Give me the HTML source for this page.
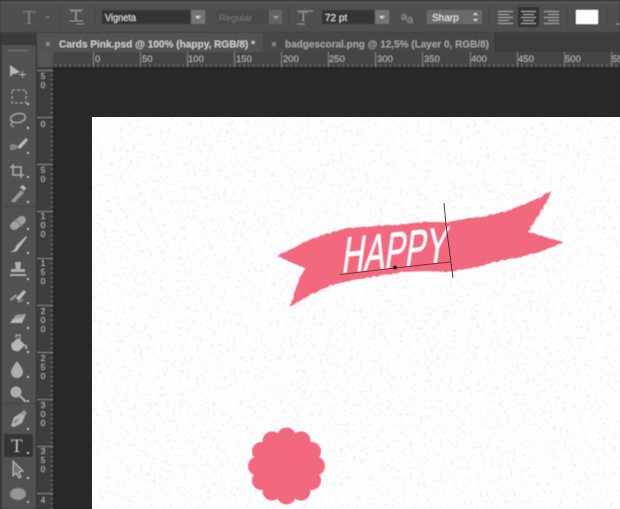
<!DOCTYPE html>
<html><head><meta charset="utf-8"><style>
html,body{margin:0;padding:0;background:#282828;width:620px;height:509px;overflow:hidden}
svg{display:block;position:absolute;left:0;top:0}
text{font-family:"Liberation Sans",sans-serif}
</style></head><body>
<svg width="620" height="509" viewBox="0 0 620 509" xmlns="http://www.w3.org/2000/svg">
<defs>
<filter id="b" x="-5%" y="-5%" width="110%" height="110%"><feGaussianBlur stdDeviation="0.5"/></filter>
<filter id="bi" x="-5%" y="-5%" width="110%" height="110%"><feGaussianBlur stdDeviation="0.65"/></filter>
<filter id="n" x="0" y="0" width="100%" height="100%">
<feTurbulence type="fractalNoise" baseFrequency="0.3" numOctaves="3" seed="4"/>
<feColorMatrix values="0 0 0 0 0.72  0 0 0 0 0.72  0 0 0 0 0.72  5 0 0 0 -2.9"/>
<feGaussianBlur stdDeviation="0.6"/>
</filter>
<filter id="r" x="-3%" y="-3%" width="106%" height="106%">
<feTurbulence type="fractalNoise" baseFrequency="0.25" numOctaves="2" seed="7" result="t"/>
<feDisplacementMap in="SourceGraphic" in2="t" scale="2.200"/>
<feGaussianBlur stdDeviation="0.4"/>
</filter>
<pattern id="hticks" width="4.71" height="15" patternUnits="userSpaceOnUse" x="93" y="52"><rect x="0" y="12" width="1" height="3" fill="#6a6a6a"/></pattern>
<pattern id="vticks" width="17" height="4.71" patternUnits="userSpaceOnUse" x="37" y="117"><rect x="13" y="0" width="3" height="1" fill="#6a6a6a"/></pattern>
</defs>

<!-- canvas + pasteboard -->
<rect width="620" height="509" fill="#282828"/>
<rect x="92" y="117" width="528" height="392" fill="#fefefe"/>
<rect x="92" y="117" width="528" height="392" filter="url(#n)" opacity=".45"/>

<!-- artwork -->
<path filter="url(#r)" fill="#f2697f" d="M277 256 L295 247 L313 238 L330 233 L347 228 L375 226 L403 224 L425 222 L447 222 L465 219 L483 217 L503 212 L523 205 L538 198 L552 191 L545 205 L536 219 L528 232 L545 237 L563 242 L550 248 L537 253 L520 257 L503 260 L476 267 L450 272 L426 271 L403 272 L378 276 L353 280 L336 284 L320 290 L305 298 L290 307 L295 290 L300 278 L305 268 L290 262 Z"/>
<g fill="#f2697f" filter="url(#b)">
<circle cx="286.500" cy="466" r="32"/>
<circle cx="286.500" cy="437" r="9.500"/><circle cx="301" cy="440.900" r="9.500"/><circle cx="311.600" cy="451.500" r="9.500"/><circle cx="315.500" cy="466" r="9.500"/><circle cx="311.600" cy="480.500" r="9.500"/><circle cx="301" cy="491.100" r="9.500"/><circle cx="286.500" cy="495" r="9.500"/><circle cx="272" cy="491.100" r="9.500"/><circle cx="261.400" cy="480.500" r="9.500"/><circle cx="257.500" cy="466" r="9.500"/><circle cx="261.400" cy="451.500" r="9.500"/><circle cx="272" cy="440.900" r="9.500"/>
</g>
<g filter="url(#b)">
<text transform="translate(341 273) rotate(-6) skewX(-14) scale(.62 1)" font-size="50" fill="#fff" stroke="#fff" stroke-width=".8">HAPPY</text>
</g>
<path d="M340 274.500 L395 268 L450 262" fill="none" stroke="#7a2a3a" stroke-width=".9"/>
<path d="M444 203 L446 225 L450 255 L453 278" fill="none" stroke="#3a2a2d" stroke-width=".9"/>
<circle cx="395" cy="267.500" r="2" fill="#222"/>

<g filter="url(#b)">
<!-- options bar -->
<rect width="620" height="33" fill="#505050"/>
<rect y="0" width="620" height="2" fill="#3f3f3f"/>
<rect y="2" width="620" height="1" fill="#636363"/>
<rect y="32" width="620" height="1" fill="#3c3c3c"/>
<text x="23" y="24" font-size="20" fill="#7e7e7e" style="font-family:'Liberation Serif',serif">T</text>
<path d="M45 16l5 0-2.500 3z" fill="#757575"/>
<rect x="60" y="6" width="1" height="22" fill="#454545"/>
<text x="71" y="21" font-size="16" fill="#989898" style="font-family:'Liberation Serif',serif">T</text>
<path d="M69 10h14M69 21h14M76 24h8" stroke="#929292" stroke-width="1" fill="none"/>
<rect x="94" y="6" width="1" height="22" fill="#454545"/>
<!-- font combos -->
<rect x="102" y="10" width="89" height="14" fill="#363636"/>
<rect x="191" y="10" width="14" height="14" fill="#747474"/>
<path d="M195 16h6l-3 3z" fill="#d8d8d8"/>
<text x="105" y="21" font-size="10" fill="#e2e2e2" textLength="31" lengthAdjust="spacingAndGlyphs">Vigneta</text>
<rect x="216" y="10" width="53" height="14" fill="#484848"/>
<rect x="269" y="10" width="13" height="14" fill="#646464"/>
<path d="M273 16h6l-3 3z" fill="#a0a0a0"/>
<text x="219" y="21" font-size="9.500" fill="#7a7a7a">Regular</text>
<rect x="289" y="6" width="1" height="22" fill="#454545"/>
<text x="299" y="21" font-size="14" fill="#9a9a9a" style="font-family:'Liberation Serif',serif">T</text>
<path d="M297 11h16M297 24h8" stroke="#929292" fill="none"/>
<rect x="322" y="10" width="53" height="14" fill="#363636"/>
<rect x="375" y="10" width="14" height="14" fill="#747474"/>
<path d="M379 16h6l-3 3z" fill="#d8d8d8"/>
<text x="325" y="21" font-size="10" fill="#e0e0e0">72 pt</text>
<text x="401" y="20" font-size="11" fill="#9a9a9a">a</text>
<text x="407" y="23" font-size="11" fill="#9a9a9a">a</text>
<rect x="427" y="10" width="55" height="14" rx="1" fill="#6a6a6a"/>
<text x="432" y="21" font-size="10" fill="#f0f0f0">Sharp</text>
<path d="M473 15l2.500-2.500 2.500 2.500zM473 19l2.500 2.500 2.500-2.500z" fill="#d8d8d8"/>
<rect x="489" y="6" width="1" height="22" fill="#454545"/>
<rect x="518" y="7" width="21" height="20" rx="1" fill="#333"/>
<g stroke="#a5a5a5" stroke-width="1" fill="none">
<path d="M498 11.500h15M498 14.500h11M498 17.500h15M498 20.500h11M498 23.500h15"/>
<path d="M521 11.500h15M523 14.500h11M521 17.500h15M523 20.500h11M521 23.500h15"/>
<path d="M544 11.500h15M548 14.500h11M544 17.500h15M548 20.500h11M544 23.500h15"/>
</g>
<rect x="567" y="6" width="1" height="22" fill="#454545"/>
<rect x="576" y="10" width="22" height="14" fill="#fff"/>
<rect x="606" y="6" width="1" height="22" fill="#454545"/>
<path d="M616 24h4" stroke="#999"/>

<!-- tab bar -->
<rect y="33" width="620" height="19" fill="#3c3c3c"/>
<rect x="37" y="33" width="226" height="19" fill="#525252"/>
<rect x="263" y="33" width="232" height="19" fill="#464646"/>
<rect x="495" y="33" width="1" height="19" fill="#333"/>
<rect y="33" width="37" height="11" fill="#2f2f2f"/>
<path d="M5 38l3 2.500-3 2.500zM12 38l-3 2.500 3 2.500z" fill="#b0b0b0"/>
<text x="45" y="47.500" font-size="10" fill="#b5b5b5">×</text>
<text x="59" y="47.500" font-size="10" font-weight="bold" fill="#cfcfcf" textLength="196" lengthAdjust="spacingAndGlyphs">Cards Pink.psd @ 100% (happy, RGB/8) *</text>
<text x="271" y="47.500" font-size="10" fill="#b5b5b5">×</text>
<text x="285" y="47.500" font-size="10" font-weight="bold" fill="#a5a5a5" textLength="204" lengthAdjust="spacingAndGlyphs">badgescoral.png @ 12,5% (Layer 0, RGB/8)</text>

<!-- top ruler -->
<rect x="37" y="52" width="583" height="15" fill="#444"/>
<rect x="37" y="52" width="583" height="15" fill="url(#hticks)"/>
<rect x="37" y="52" width="16" height="15" fill="#555"/>
<rect x="37" y="67" width="583" height="1" fill="#1e1e1e"/>
<g fill="#808080">
<rect x="93" y="52" width="1" height="15"/><rect x="140" y="52" width="1" height="15"/><rect x="187" y="52" width="1" height="15"/><rect x="234" y="52" width="1" height="15"/><rect x="281" y="52" width="1" height="15"/><rect x="328" y="52" width="1" height="15"/><rect x="375" y="52" width="1" height="15"/><rect x="422" y="52" width="1" height="15"/><rect x="470" y="52" width="1" height="15"/><rect x="517" y="52" width="1" height="15"/><rect x="564" y="52" width="1" height="15"/><rect x="611" y="52" width="1" height="15"/>
</g>
<g font-size="9.500" fill="#b8b8b8">
<text x="95" y="62">0</text><text x="142" y="62">50</text><text x="188" y="62">100</text><text x="236" y="62">150</text><text x="283" y="62">200</text><text x="329" y="62">250</text><text x="377" y="62">300</text><text x="424" y="62">350</text><text x="471" y="62">400</text><text x="518" y="62">450</text><text x="565" y="62">500</text><text x="612" y="62">55</text>
</g>

<!-- left ruler -->
<rect x="37" y="67" width="16" height="442" fill="#3d3d3d"/>
<rect x="37" y="67" width="16" height="442" fill="url(#vticks)"/>
<rect x="53" y="67" width="1" height="442" fill="#1e1e1e"/>
<g fill="#808080">
<rect x="37" y="70" width="16" height="1"/><rect x="37" y="117" width="16" height="1"/><rect x="37" y="164" width="16" height="1"/><rect x="37" y="211" width="16" height="1"/><rect x="37" y="258" width="16" height="1"/><rect x="37" y="305" width="16" height="1"/><rect x="37" y="352" width="16" height="1"/><rect x="37" y="399" width="16" height="1"/><rect x="37" y="446" width="16" height="1"/><rect x="37" y="493" width="16" height="1"/>
</g>
<g font-size="8.500" fill="#b8b8b8" text-anchor="middle">
<text x="43" y="79">5</text><text x="43" y="88">0</text>
<text x="43" y="127">0</text>
<text x="43" y="173">5</text><text x="43" y="182">0</text>
<text x="43" y="219">1</text><text x="43" y="228">0</text><text x="43" y="237">0</text>
<text x="43" y="266">1</text><text x="43" y="275">5</text><text x="43" y="284">0</text>
<text x="43" y="314">2</text><text x="43" y="323">0</text><text x="43" y="332">0</text>
<text x="43" y="361">2</text><text x="43" y="370">5</text><text x="43" y="379">0</text>
<text x="43" y="408">3</text><text x="43" y="417">0</text><text x="43" y="426">0</text>
<text x="43" y="454">3</text><text x="43" y="463">5</text><text x="43" y="472">0</text>
<text x="43" y="503">4</text>
</g>

<!-- tools panel -->
<rect x="0" y="33" width="37" height="476" fill="#3a3a3a"/>
<rect x="2" y="44" width="34" height="465" fill="#515151"/>
<rect x="36" y="44" width="1" height="465" fill="#2c2c2c"/>
<rect x="2" y="44" width="34" height="1" fill="#3a3a3a"/>
<path d="M8 50.500h20" stroke="#707070" stroke-width="1.500"/>
<g stroke="#444"><path d="M4 206.500h32M4 403.500h32"/></g>
<rect x="4" y="434" width="29" height="23" fill="#353535"/>
</g>

<!-- tool icons -->
<g filter="url(#bi)">
<g fill="#b8b8b8">
<path d="M10 65l0 12 3-3 2 0 5-2z"/><path d="M22 71h1v3h3v1h-3v3h-1v-3h-3v-1h3z"/>
</g>
<path d="M12 90h14v13h-14z" fill="none" stroke="#a5a5a5" stroke-width="1.300" stroke-dasharray="3 2"/>
<ellipse cx="18" cy="118" rx="7.500" ry="4.500" transform="rotate(-10 18 118)" fill="none" stroke="#a8a8a8" stroke-width="1.500"/>
<path d="M12 122l-1 3 3 2" fill="none" stroke="#a8a8a8" stroke-width="1.300"/>
<path d="M17 147l9-9 2 2-8 9z" fill="#bcbcbc"/><path d="M10 145q5-3 8 2q-3 4-8 3z" fill="#858585"/>
<path d="M13 164v11h11M10 167h11v11" fill="none" stroke="#b0b0b0" stroke-width="1.500"/>
<path d="M11 201l10-11 3 3-10 10z" fill="#979797"/><path d="M20 187l3-2 3 3-2 3z" fill="#bbb"/>
<rect x="9" y="219" width="18" height="8" rx="4" transform="rotate(-38 18 223)" fill="#a0a0a0"/>
<path d="M13 218l10 9" stroke="#707070" stroke-width="1"/>
<path d="M16 246l10-10 1 1-8 11z" fill="#bcbcbc"/><path d="M10 252q5-1 6-6l3 2q-2 5-9 4z" fill="#bcbcbc"/>
<path d="M15 262h6v2l-1 5h5v3h-14v-3h5l-1-5z" fill="#b0b0b0"/><rect x="10" y="274" width="16" height="2" fill="#b0b0b0"/>
<path d="M16 298l8-8 2 2-7 9z" fill="#bcbcbc"/><path d="M10 299l6-5 1 2-6 5z" fill="#a0a0a0"/><path d="M17 302l6-3 1 1-5 3z" fill="#8a8a8a"/>
<path d="M10 323l6-8 10-1-4 9z" fill="#b8b8b8"/><path d="M16 315l10-1-4 4-9 1z" fill="#999"/>
<path d="M11 344l7-6 7 7-6 6q-4 1-7-2z" fill="#b8b8b8"/><path d="M16 338v-3h4v5" fill="none" stroke="#aaa" stroke-width="1.300"/><path d="M25 345q2 2 1 4" stroke="#aaa" stroke-width="2" fill="none"/>
<path d="M17 361q-6 8-6 11a6 6 0 0 0 12 0q0-3-6-11z" fill="#aeaeae"/>
<circle cx="16" cy="392" r="5.500" fill="#b0b0b0"/><path d="M20 396l6 6" stroke="#b0b0b0" stroke-width="2"/>
<path d="M11 426l3-9 7-4 4 3-3 7-8 4z" fill="#b0b0b0"/><path d="M21 413l3-3 3 3-2 3z" fill="#999"/><path d="M14 423l4-4" stroke="#555"/>
<text x="11" y="452" font-size="19" fill="#c4c4c4" style="font-family:'Liberation Serif',serif">T</text>
<path d="M13 461v15l3-3 3 5 2-1-2-5 4-1z" fill="#777" stroke="#c0c0c0" stroke-width="1"/>
<ellipse cx="18" cy="494" rx="8" ry="6" fill="#969696" stroke="#707070"/>
<g fill="#c8c8c8">
<rect x="27" y="103" width="2" height="2"/><rect x="27" y="127" width="2" height="2"/><rect x="27" y="152" width="2" height="2"/><rect x="27" y="176" width="2" height="2"/><rect x="27" y="201" width="2" height="2"/><rect x="27" y="228" width="2" height="2"/><rect x="27" y="252" width="2" height="2"/><rect x="27" y="278" width="2" height="2"/><rect x="27" y="302" width="2" height="2"/><rect x="27" y="327" width="2" height="2"/><rect x="27" y="351" width="2" height="2"/><rect x="27" y="376" width="2" height="2"/><rect x="27" y="400" width="2" height="2"/><rect x="27" y="428" width="2" height="2"/><rect x="27" y="452" width="2" height="2"/><rect x="27" y="477" width="2" height="2"/><rect x="27" y="501" width="2" height="2"/>
</g>
</g>
</svg>
</body></html>
